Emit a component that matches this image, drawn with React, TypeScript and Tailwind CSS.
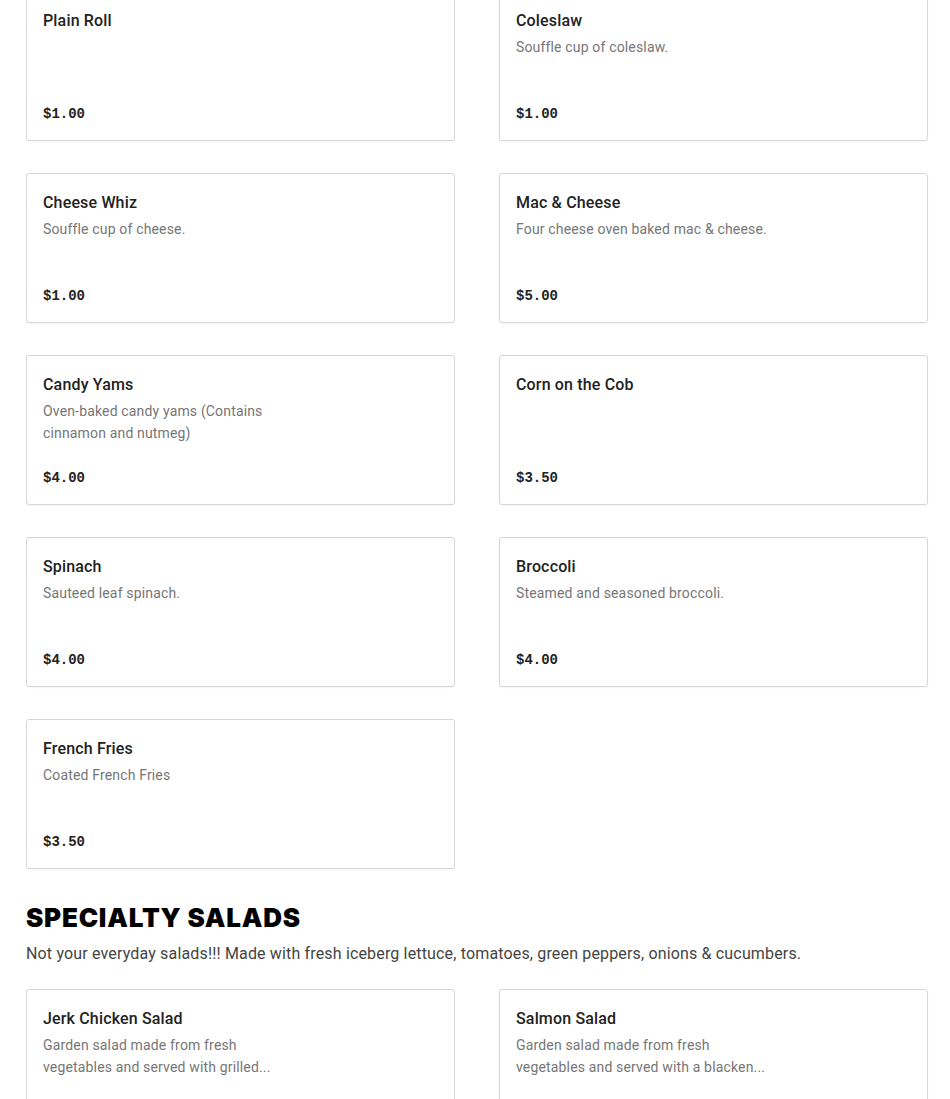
import React from "react";

type Item = { name: string; desc?: string; price?: string };

const sides: Item[] = [
  { name: "Plain Roll", price: "$1.00" },
  { name: "Coleslaw", desc: "Souffle cup of coleslaw.", price: "$1.00" },
  { name: "Cheese Whiz", desc: "Souffle cup of cheese.", price: "$1.00" },
  { name: "Mac & Cheese", desc: "Four cheese oven baked mac & cheese.", price: "$5.00" },
  { name: "Candy Yams", desc: "Oven-baked candy yams (Contains cinnamon and nutmeg)", price: "$4.00" },
  { name: "Corn on the Cob", price: "$3.50" },
  { name: "Spinach", desc: "Sauteed leaf spinach.", price: "$4.00" },
  { name: "Broccoli", desc: "Steamed and seasoned broccoli.", price: "$4.00" },
  { name: "French Fries", desc: "Coated French Fries", price: "$3.50" },
];

const salads: Item[] = [
  { name: "Jerk Chicken Salad", desc: "Garden salad made from fresh vegetables and served with grilled...", price: "$12.00" },
  { name: "Salmon Salad", desc: "Garden salad made from fresh vegetables and served with a blacken...", price: "$14.00" },
];

function MenuCard({ item }: { item: Item }) {
  return (
    <div className="h-[150px] border border-[#d6d6d6] rounded-[3px] bg-white px-4 pt-[17px] pb-4 flex flex-col shadow-[0_1px_2px_rgba(0,0,0,0.04)]">
      <h3 className="text-[16px] leading-6 font-medium text-[#222]">{item.name}</h3>
      <div className="mt-[3px] h-[44px]">
        {item.desc && (
          <p className="text-[14px] leading-[22px] text-[#767676] max-w-[262px] line-clamp-2">{item.desc}</p>
        )}
      </div>
      <div className="mt-auto font-['Liberation_Mono',monospace] font-bold text-[14px] leading-5 text-[#222] tracking-normal">
        {item.price}
      </div>
    </div>
  );
}

export default function App() {
  return (
    <div className="bg-white min-h-screen font-['Roboto',sans-serif] tracking-[0.01em] px-[26px] -mt-[9px] pb-10">
      <div className="grid grid-cols-2 gap-x-[44px] gap-y-8 w-[902px]">
        {sides.map((item) => (
          <MenuCard key={item.name} item={item} />
        ))}
      </div>

      <h2 className="mt-[31px] text-[26px] leading-9 font-black text-black tracking-[0.03em] font-['Inter',sans-serif]">
        SPECIALTY SALADS
      </h2>
      <p className="mt-[6px] text-[16px] leading-6 text-[#444]">
        Not your everyday salads!!! Made with fresh iceberg lettuce, tomatoes, green peppers, onions &amp; cucumbers.
      </p>

      <div className="mt-[23px] grid grid-cols-2 gap-x-[44px] gap-y-8 w-[902px]">
        {salads.map((item) => (
          <MenuCard key={item.name} item={item} />
        ))}
      </div>
    </div>
  );
}
